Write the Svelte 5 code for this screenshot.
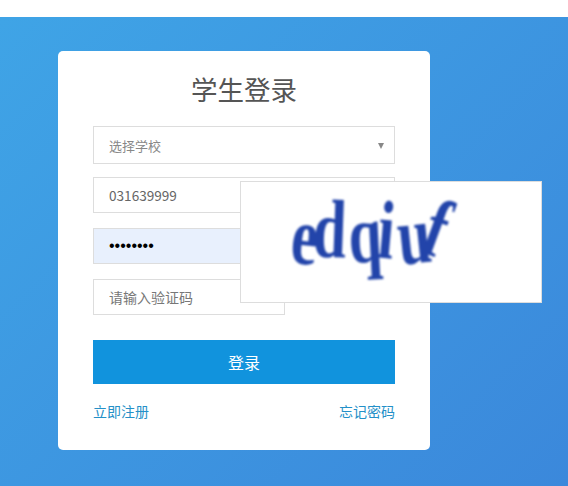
<script>
  let school = '选择学校';
  let username = '031639999';
  let password = '12345678';
  const captcha = [
    { ch: 'e', r: 6, y: 4, x: 0 },
    { ch: 'd', r: 2, y: -3, x: -9 },
    { ch: 'q', r: -3, y: 2, x: -12 },
    { ch: 'i', r: 5, y: -2, x: -19 },
    { ch: 'u', r: -6, y: 3, x: -20 },
    { ch: 'f', r: 20, y: -4, x: -27 }
  ];
</script>

<div class="page">
  <div class="card">
    <h1>学生登录</h1>

    <div class="select">
      <span>{school}</span>
      <i class="arrow"></i>
    </div>
    <input class="field user" type="text" bind:value={username} />
    <input class="field filled" type="password" bind:value={password} />
    <input class="field code" type="text" placeholder="请输入验证码" />

    <button>登录</button>

    <div class="links">
      <a href="#register">立即注册</a>
      <a href="#forgot">忘记密码</a>
    </div>

    <!-- captcha preview, sits over the form -->
    <div class="captcha">
      <div class="letters">
        {#each captcha as c}
          <span style="transform: translate({c.x}px, {c.y}px) rotate({c.r}deg) scale(0.88, 1.22)">{c.ch}</span>
        {/each}
      </div>
    </div>
  </div>
</div>

<style>
  :global(body) {
    margin: 0;
    background: #fff;
    font-family: "Noto Sans CJK SC", "Liberation Sans", sans-serif;
  }

  .page {
    margin-top: 17px;
    height: 469px;
    padding: 34px 0 0 58px;
    box-sizing: border-box;
    background: linear-gradient(135deg, #3fa4e6 0%, #3b88db 100%);
    overflow: hidden;
  }

  .card {
    position: relative;
    width: 372px;
    height: 399px;
    box-sizing: border-box;
    padding: 0 35px;
    background: #fff;
    border-radius: 5px;
  }

  h1 {
    margin: 0;
    padding-top: 20px;
    height: 75px;
    box-sizing: border-box;
    text-align: center;
    font-size: 26.5px;
    line-height: 36px;
    font-weight: 400;
    color: #555;
  }

  .select {
    height: 38px;
    box-sizing: border-box;
    display: flex;
    align-items: center;
    justify-content: space-between;
    padding: 0 10px 0 15px;
    border: 1px solid #ddd;
    font-size: 13px;
    color: #888;
  }

  .arrow {
    width: 0;
    height: 0;
    margin-top: 1px;
    border-left: 3.5px solid transparent;
    border-right: 3.5px solid transparent;
    border-top: 6px solid #888;
  }

  .field {
    display: block;
    width: 100%;
    height: 36px;
    box-sizing: border-box;
    margin-top: 15px;
    padding: 0 15px;
    border: 1px solid #ddd;
    border-radius: 0;
    outline: none;
    font-family: inherit;
    font-size: 14px;
    color: #666;
    background: #fff;
  }

  .field::placeholder {
    color: #777;
    opacity: 1;
  }

  .select + .field {
    margin-top: 13px;
  }

  .user {
    font-size: 13.6px;
  }

  .filled {
    background: #e8f0fd;
    color: #000;
    font-family: "Liberation Sans", sans-serif;
    font-size: 16px;
  }

  .code {
    width: 192px;
  }

  button {
    display: block;
    width: 100%;
    height: 44px;
    margin-top: 25px;
    border: none;
    background: #1193dd;
    color: #fff;
    font-family: inherit;
    font-size: 16px;
  }

  .links {
    display: flex;
    justify-content: space-between;
    margin-top: 17px;
    font-size: 14px;
    line-height: 20px;
  }

  a {
    color: #2490c8;
    text-decoration: none;
  }

  .captcha {
    position: absolute;
    left: 182px;
    top: 130px;
    width: 302px;
    height: 122px;
    box-sizing: border-box;
    background: #fff;
    border: 1px solid #ddd;
  }

  .letters {
    display: flex;
    padding: 10px 0 0 49px;
    font-family: "Liberation Serif", serif;
    font-weight: 700;
    font-size: 68px;
    line-height: 80px;
    color: #2244aa;
    filter: blur(1.2px);
  }

  .letters span {
    display: block;
    transform-origin: center;
  }
</style>
